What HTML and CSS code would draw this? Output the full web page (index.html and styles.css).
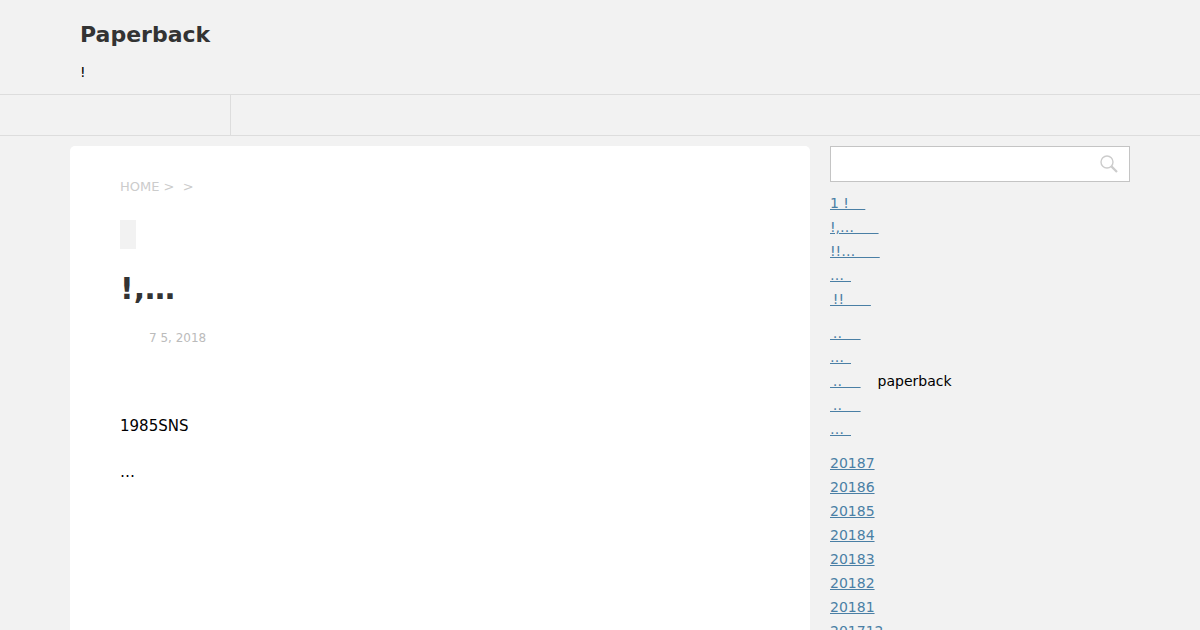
FILE: index.html
```html
<!DOCTYPE html>
<html lang="ja">
<head>
<meta charset="utf-8">
<title>Paperback</title>
<link rel="stylesheet" href="styles.css">
</head>
<body>
<header class="site-header">
  <h1 class="site-title">Paperback</h1>
  <p class="site-desc">!</p>
</header>
<nav class="site-nav"><div class="nav-item"></div></nav>
<div class="layout">
  <main class="card">
    <div class="crumbs">HOME &gt;&nbsp; &gt;</div>
    <div class="tag"></div>
    <h2 class="post-title">!,…</h2>
    <div class="post-date">7 5, 2018</div>
    <p class="post-text first">1985SNS</p>
    <p class="post-text">…</p>
  </main>
  <aside class="sidebar">
    <form class="search">
      <svg class="search-icon" width="20" height="20" viewBox="0 0 20 20" aria-hidden="true"><circle cx="8" cy="8" r="6" fill="none" stroke="#ccc" stroke-width="1.4"/><path d="M12.4 12.4 18 18" fill="none" stroke="#ccc" stroke-width="2.2"/></svg>
    </form>
    <ul class="links">
      <li><a href="#">1 !&emsp;&#x2006;</a></li>
      <li><a href="#">!,…&emsp;&ensp;&#x2005;</a></li>
      <li><a href="#">!!…&emsp;&ensp;&#x2005;</a></li>
      <li><a href="#">…&ensp;</a></li>
      <li><a href="#">&thinsp;!!&emsp;&ensp;&nbsp;&hairsp;</a></li>
    </ul>
    <ul class="links">
      <li><a href="#">&thinsp;‥&emsp;&nbsp;</a></li>
      <li><a href="#">…&ensp;</a></li>
      <li><a href="#">&thinsp;‥&emsp;&nbsp;</a><span class="plain">paperback</span></li>
      <li><a href="#">&thinsp;‥&emsp;&nbsp;</a></li>
      <li><a href="#">…&ensp;</a></li>
    </ul>
    <ul class="links">
      <li><a href="#">20187</a></li>
      <li><a href="#">20186</a></li>
      <li><a href="#">20185</a></li>
      <li><a href="#">20184</a></li>
      <li><a href="#">20183</a></li>
      <li><a href="#">20182</a></li>
      <li><a href="#">20181</a></li>
      <li><a href="#">201712</a></li>
    </ul>
  </aside>
</div>
</body>
</html>
```

FILE: styles.css
```css
* { box-sizing: border-box; }
html, body { height: 630px; overflow: hidden; }
body {
  margin: 0;
  background: #f2f2f2;
  color: #000;
  font-family: "DejaVu Sans", sans-serif;
}
.site-header { height: 94px; padding: 21px 80px 0; }
.site-title { margin: 0; font-size: 22px; line-height: 27px; font-weight: 700; color: #333; }
.site-desc { margin: 15px 0 0; font-size: 14px; line-height: 18px; }
.site-nav {
  height: 42px;
  border-top: 1px solid #ddd;
  border-bottom: 1px solid #ddd;
}
.nav-item { width: 231px; height: 40px; border-right: 1px solid #ddd; }
.layout {
  display: flex;
  gap: 20px;
  padding: 10px 0 0 70px;
  align-items: flex-start;
}
.card {
  width: 740px;
  height: 700px;
  padding: 32px 50px 0;
  background: #fff;
  border-radius: 5px;
}
.crumbs { font-size: 13px; line-height: 18px; color: #ccc; }
.tag { width: 16px; height: 29px; margin-top: 24px; background: #f2f2f2; }
.post-title { margin: 20px 0 0; font-size: 30px; line-height: 40px; font-weight: 700; color: #333; }
.post-date { margin: 20px 0 0 29px; font-size: 12px; line-height: 18px; color: #bbb; }
.post-text { margin: 0 0 26px; font-size: 15px; line-height: 20px; }
.post-text.first { margin-top: 69px; }
.sidebar { width: 300px; }
.search {
  position: relative;
  height: 36px;
  margin-bottom: 9px;
  background: #fff;
  border: 1px solid #c4c4c4;
}
.search-icon { position: absolute; right: 10px; top: 7px; }
.links { margin: 0 0 10px; padding: 0; list-style: none; font-size: 14px; line-height: 24px; }
.links a { color: #4a7fa5; }
.plain { margin-left: 17px; }
```
